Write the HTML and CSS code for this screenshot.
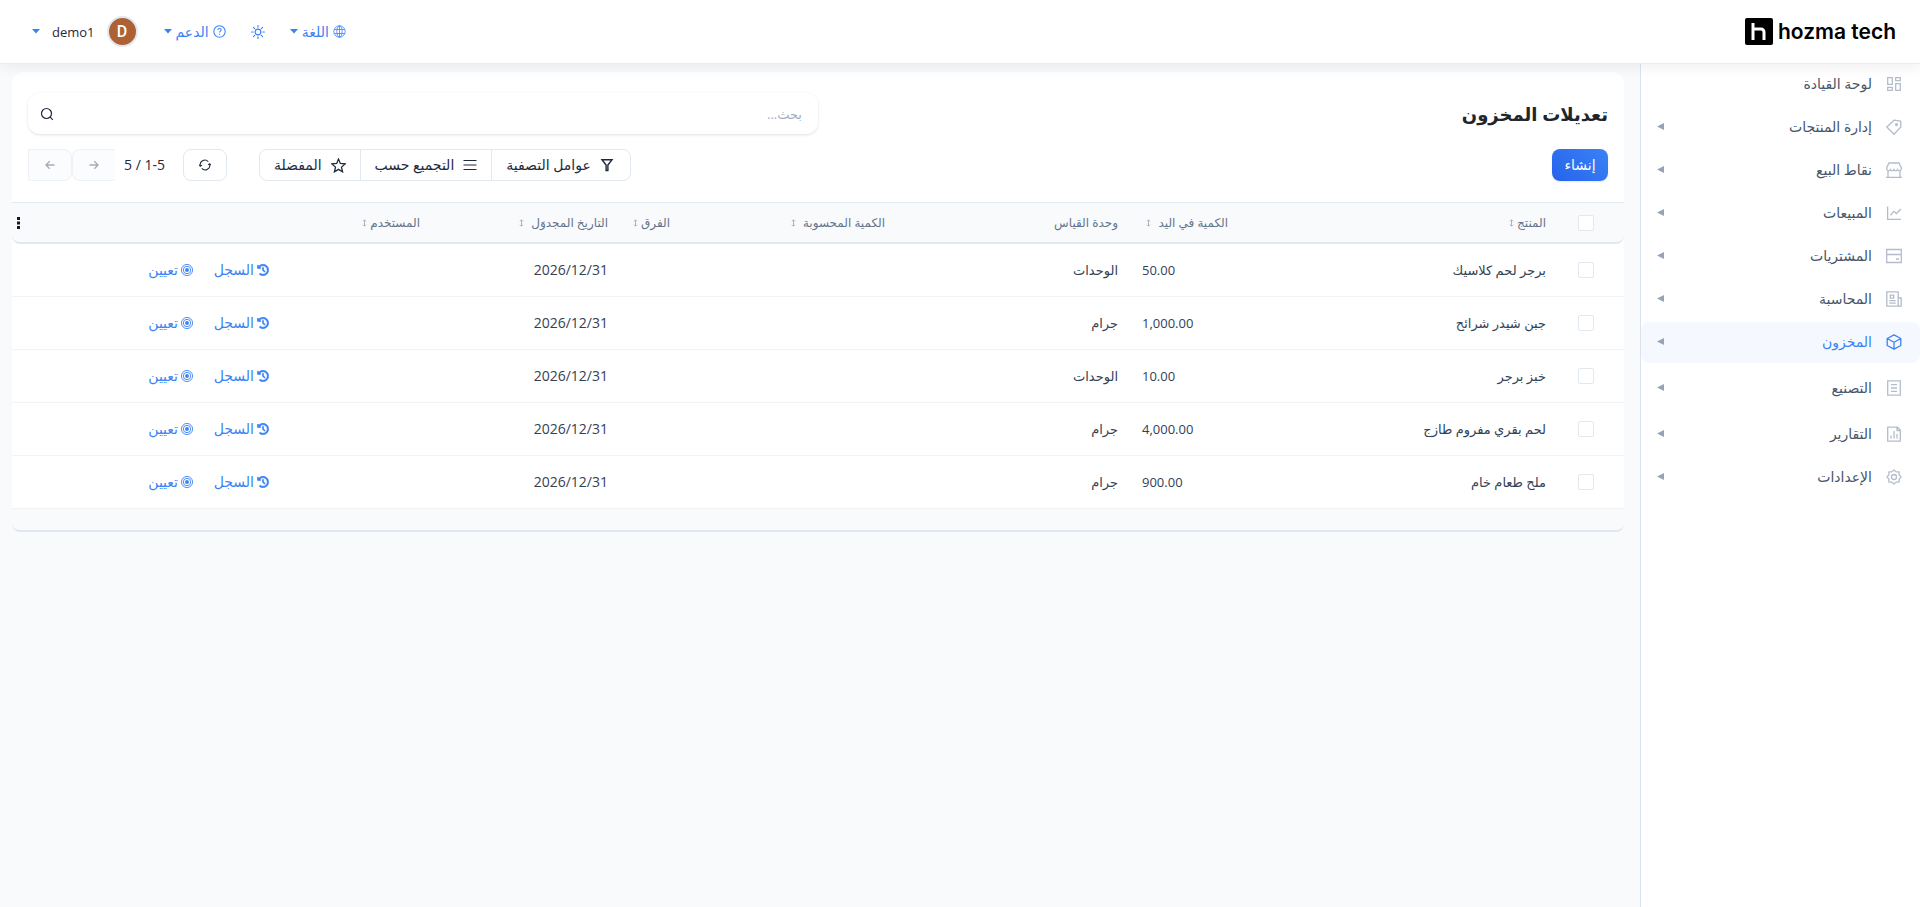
FILE: index.html
```html
<!DOCTYPE html>
<html lang="ar" dir="rtl">
<head>
    <meta charset="UTF-8">
    <meta name="viewport" content="width=device-width, initial-scale=1.0">
    <title>تعديلات المخزون</title>
    <link rel="stylesheet" href="styles.css">
</head>
<body>
    <svg class="sprite" aria-hidden="true">
        <symbol id="i-history" viewBox="-16 -16 544 544"><path fill="currentColor" stroke="currentColor" stroke-width="28" d="M75 75L41 41C26 26 0 36.500 0 57.900V168c0 13.300 10.700 24 24 24h110.100c21.400 0 32.100-25.900 17-41l-30.800-30.800C155 85.500 203 64 256 64c106 0 192 86 192 192s-86 192-192 192c-40.800 0-78.600-12.700-109.700-34.400-14.500-10.100-34.400-6.600-44.600 7.900s-6.600 34.400 7.900 44.600C151.200 495 201.700 512 256 512c141.400 0 256-114.600 256-256S397.400 0 256 0C185.300 0 121.300 28.700 75 75zm181 53c-13.300 0-24 10.700-24 24v104c0 6.400 2.500 12.500 7 17l72 72c9.400 9.400 24.600 9.400 33.900 0s9.400-24.600 0-33.900l-65-65V152c0-13.300-10.700-24-24-24z"/></symbol>
        <symbol id="i-target" viewBox="0 0 16 16"><g fill="none" stroke="currentColor"><circle cx="8" cy="8" r="7.400" stroke-width="1.200"/><circle cx="8" cy="8" r="4.900" stroke-width="1.200"/></g><circle cx="8" cy="8" r="2.600" fill="currentColor"/></symbol>
        <symbol id="i-caret" viewBox="0 0 8 5"><path fill="currentColor" d="M0 0h8L4 4.500z"/></symbol>
        <symbol id="i-side" viewBox="0 0 7 7"><path fill="currentColor" d="M7 0v7L0 3.500z"/></symbol>
        <symbol id="i-sort" viewBox="0 0 5 8"><path fill="none" stroke="currentColor" stroke-width=".8" d="M2.500 1v6M1 2.300L2.500.8 4 2.300M1 5.700l1.500 1.500L4 5.700"/></symbol>
    </svg>

    <header class="navbar">
        <a class="logo" href="#">
            <svg width="28" height="28" viewBox="0 0 28 28"><rect width="28" height="27" rx="2"/><path d="M8 5v17M8 11h8a3 3 0 0 1 3 3v8" fill="none" stroke="#fff" stroke-width="3"/></svg>
            <span>hozma tech</span>
        </a>
        <nav class="menu">
            <a class="menu-link" href="#">
                <svg width="13" height="13" viewBox="0 0 16 16" fill="none" stroke="currentColor"><circle cx="8" cy="8" r="7"/><ellipse cx="8" cy="8" rx="3.300" ry="7"/><path d="M8 1v14M1.500 5.500h13M1.500 10.500h13"/></svg>
                <span>اللغة</span>
                <svg class="caret"><use href="#i-caret"/></svg>
            </a>
            <button class="menu-link sun" type="button" aria-label="الوضع">
                <svg width="14" height="14" viewBox="0 0 16 16" fill="none" stroke="currentColor" stroke-width="1.300" stroke-linecap="round"><circle cx="8" cy="8" r="3.300"/><path d="M8 .7v1.800M8 13.500v1.800M.7 8h1.800M13.500 8h1.800M2.800 2.800l1.300 1.300M11.900 11.900l1.300 1.300M13.200 2.800l-1.300 1.300M4.100 11.900l-1.300 1.300"/></svg>
            </button>
            <a class="menu-link" href="#">
                <svg width="13" height="13" viewBox="0 0 16 16" fill="none" stroke="currentColor" stroke-width="1.300"><circle cx="8" cy="8" r="7"/><path d="M5.900 6.200c0-1.300 1-2 2.100-2s2.100.8 2.100 1.900c0 1.500-2 1.500-2 3.200"/><path d="M8.100 10.700v1.400"/></svg>
                <span>الدعم</span>
                <svg class="caret"><use href="#i-caret"/></svg>
            </a>
            <a class="menu-link user" href="#">
                <span class="avatar">D</span>
                <span class="user-name">demo1</span>
                <svg class="caret"><use href="#i-caret"/></svg>
            </a>
        </nav>
    </header>

    <div class="page">
        <nav class="sidebar">
            <a class="side-item" href="#">
                <svg class="side-icon" viewBox="0 0 16 16"><path d="M1.700 1.700h4.600v6.600H1.700zM1.700 11.300h4.600v3H1.700zM9.700 1.700h4.600v3H9.700zM9.700 7.700h4.600v6.600H9.700z"/></svg>
                <span>لوحة القيادة</span>
            </a>
            <a class="side-item" href="#">
                <svg class="side-icon" viewBox="0 0 16 16"><path d="M8 1.200l6.800 1V8L8 15.200.8 8z" stroke-linejoin="round"/><circle cx="10.500" cy="5.600" r=".9"/></svg>
                <span>إدارة المنتجات</span>
                <svg class="arrow"><use href="#i-side"/></svg>
            </a>
            <a class="side-item" href="#">
                <svg class="side-icon" viewBox="0 0 16 16"><path d="M3 1h10l2.200 4.500v2c-1 1.800-3 1.800-3.700 0-1 1.800-2.700 1.800-3.500 0-.8 1.800-2.500 1.800-3.500 0-.7 1.800-2.700 1.800-3.700 0v-2zM2 9v6M14 9v6M0 15.300h16"/></svg>
                <span>نقاط البيع</span>
                <svg class="arrow"><use href="#i-side"/></svg>
            </a>
            <a class="side-item" href="#">
                <svg class="side-icon" viewBox="0 0 16 16"><path d="M1.600 1.500v12.900H15M4.500 10.300l3.200-4 2.800 2.200L14.800 4"/></svg>
                <span>المبيعات</span>
                <svg class="arrow"><use href="#i-side"/></svg>
            </a>
            <a class="side-item" href="#">
                <svg class="side-icon" viewBox="0 0 16 16"><path d="M.7 1.500h14.600v13H.7zM.7 6.500h14.600M10 11h3"/></svg>
                <span>المشتريات</span>
                <svg class="arrow"><use href="#i-side"/></svg>
            </a>
            <a class="side-item" href="#">
                <svg class="side-icon" viewBox="0 0 16 16"><path d="M.8.800h11.400v14.400H.8zM12.200 7h3v8.200h-3M4.300 4.200h3.400v3H4.300zM3.300 9.700h6.400M3.300 12.200h6.400"/></svg>
                <span>المحاسبة</span>
                <svg class="arrow"><use href="#i-side"/></svg>
            </a>
            <a class="side-item active grouped" href="#">
                <svg class="side-icon" viewBox="0 0 16 16"><path d="M8 .900l6.800 3.600v7L8 15.100l-6.800-3.600v-7zM1.200 4.500L8 8.200l6.800-3.700M8 8.200v6.900" stroke-linejoin="round"/></svg>
                <span>المخزون</span>
                <svg class="arrow"><use href="#i-side"/></svg>
            </a>
            <a class="side-item grouped" href="#">
                <svg class="side-icon" viewBox="0 0 16 16"><path d="M1.700.800h12.600v14.400H1.700zM5 4.700h6M5 8h6M5 11.300h6"/></svg>
                <span>التصنيع</span>
                <svg class="arrow"><use href="#i-side"/></svg>
            </a>
            <a class="side-item" href="#">
                <svg class="side-icon" viewBox="0 0 16 16"><path d="M1.700 1.200h9.800l2.800 2.800v11.200H1.700zM11 1.200v3.300h3.300M5 9.500v3M8 5v7.500M11 8v4.500"/></svg>
                <span>التقارير</span>
                <svg class="arrow"><use href="#i-side"/></svg>
            </a>
            <a class="side-item" href="#">
                <svg class="side-icon" viewBox="0 0 16 16"><path d="M8 .900l2.100 2h3v3l2 2.100-2 2.100v3h-3L8 15.100l-2.100-2h-3v-3L.9 8l2-2.100v-3h3z" stroke-linejoin="round"/><circle cx="8" cy="8" r="2.500"/></svg>
                <span>الإعدادات</span>
                <svg class="arrow"><use href="#i-side"/></svg>
            </a>
        </nav>

        <main class="content">
            <div class="panel">
                <div class="panel-row">
                    <h1>تعديلات المخزون</h1>
                    <div class="search">
                        <input type="search" aria-label="بحث" placeholder="بحث...">
                        <svg width="14" height="14" viewBox="0 0 14 14" fill="none" stroke="currentColor" stroke-width="1.200"><circle cx="6.500" cy="6.500" r="5"/><path d="M10.200 10.200l2.600 2.600"/></svg>
                    </div>
                </div>
                <div class="panel-row">
                    <button class="btn-create" type="button">إنشاء</button>
                    <div class="tools">
                        <div class="filters">
                            <button type="button">
                                <svg width="14" height="14" viewBox="0 0 14 14" fill="none" stroke="currentColor" stroke-width="1.400"><path d="M2 1.800h10L7.900 7v5.500H6.100V7z"/></svg>
                                عوامل التصفية
                            </button>
                            <button type="button">
                                <svg width="14" height="14" viewBox="0 0 14 14" fill="none" stroke="currentColor" stroke-width="1.200"><path d="M.5 2.500h13M.5 7h13M.5 11.500h13"/></svg>
                                التجميع حسب
                            </button>
                            <button type="button">
                                <svg width="15" height="15" viewBox="0 0 14 14" fill="none" stroke="currentColor" stroke-width="1.200"><path d="M7 1l1.700 4.100 4.500.4-3.400 3 1 4.400L7 10.600l-3.800 2.300 1-4.400-3.400-3 4.500-.4z"/></svg>
                                المفضلة
                            </button>
                        </div>
                        <button class="btn-refresh" type="button" aria-label="تحديث">
                            <svg width="12" height="12" viewBox="0 0 14 14" fill="none" stroke="currentColor" stroke-width="1.200"><path d="M1.600 8.400A5.500 5.500 0 0 1 10.800 3M12.400 5.600A5.500 5.500 0 0 1 3.200 11"/><path d="M.3 6.600l1.200 2 1.900-1.400M13.700 7.400l-1.200-2-1.900 1.400"/></svg>
                        </button>
                        <div class="pager">
                            <span dir="ltr">5 / 1-5</span>
                            <button type="button" aria-label="السابق" disabled>
                                <svg width="10" height="10" viewBox="0 0 10 10" fill="none" stroke="currentColor" stroke-width="1.300"><path d="M.5 5h8.500M5.300 1.200L9.100 5 5.300 8.800"/></svg>
                            </button>
                            <button type="button" aria-label="التالي" disabled>
                                <svg width="10" height="10" viewBox="0 0 10 10" fill="none" stroke="currentColor" stroke-width="1.300"><path d="M9.500 5H1M4.700 1.200L.9 5l3.800 3.800"/></svg>
                            </button>
                        </div>
                    </div>
                </div>
            </div>

            <table class="list">
                <colgroup>
                    <col class="c-check"><col class="c-product"><col class="c-qty"><col class="c-uom"><col class="c-counted">
                    <col class="c-diff"><col class="c-date"><col class="c-user"><col class="c-history"><col class="c-assign"><col class="c-more">
                </colgroup>
                <thead>
                    <tr>
                        <th><input type="checkbox" aria-label="تحديد الكل"></th>
                        <th>المنتج <svg class="sort"><use href="#i-sort"/></svg></th>
                        <th>الكمية في اليد <svg class="sort wide"><use href="#i-sort"/></svg></th>
                        <th>وحدة القياس</th>
                        <th>الكمية المحسوبة <svg class="sort wide"><use href="#i-sort"/></svg></th>
                        <th>الفرق <svg class="sort"><use href="#i-sort"/></svg></th>
                        <th>التاريخ المجدوَل <svg class="sort wide"><use href="#i-sort"/></svg></th>
                        <th>المستخدم <svg class="sort"><use href="#i-sort"/></svg></th>
                        <th></th>
                        <th></th>
                        <th class="more"><button type="button" aria-label="خيارات"><svg width="3" height="12" viewBox="0 0 3 12"><path fill="currentColor" d="M0 0h3v3H0zM0 4.500h3v3H0zM0 9h3v3H0z"/></svg></button></th>
                    </tr>
                </thead>
                <tbody>
                    <tr>
                        <td><input type="checkbox" aria-label="برجر لحم كلاسيك"></td>
                        <td>برجر لحم كلاسيك</td>
                        <td class="num">50.00</td>
                        <td>الوحدات</td>
                        <td></td>
                        <td></td>
                        <td class="date">2026/12/31</td>
                        <td></td>
                        <td><button class="link" type="button"><svg><use href="#i-history"/></svg>السجل</button></td>
                        <td><button class="link" type="button"><svg><use href="#i-target"/></svg>تعيين</button></td>
                        <td></td>
                    </tr>
                    <tr>
                        <td><input type="checkbox" aria-label="جبن شيدر شرائح"></td>
                        <td>جبن شيدر شرائح</td>
                        <td class="num">1,000.00</td>
                        <td>جرام</td>
                        <td></td>
                        <td></td>
                        <td class="date">2026/12/31</td>
                        <td></td>
                        <td><button class="link" type="button"><svg><use href="#i-history"/></svg>السجل</button></td>
                        <td><button class="link" type="button"><svg><use href="#i-target"/></svg>تعيين</button></td>
                        <td></td>
                    </tr>
                    <tr>
                        <td><input type="checkbox" aria-label="خبز برجر"></td>
                        <td>خبز برجر</td>
                        <td class="num">10.00</td>
                        <td>الوحدات</td>
                        <td></td>
                        <td></td>
                        <td class="date">2026/12/31</td>
                        <td></td>
                        <td><button class="link" type="button"><svg><use href="#i-history"/></svg>السجل</button></td>
                        <td><button class="link" type="button"><svg><use href="#i-target"/></svg>تعيين</button></td>
                        <td></td>
                    </tr>
                    <tr>
                        <td><input type="checkbox" aria-label="لحم بقري مفروم طازج"></td>
                        <td>لحم بقري مفروم طازج</td>
                        <td class="num">4,000.00</td>
                        <td>جرام</td>
                        <td></td>
                        <td></td>
                        <td class="date">2026/12/31</td>
                        <td></td>
                        <td><button class="link" type="button"><svg><use href="#i-history"/></svg>السجل</button></td>
                        <td><button class="link" type="button"><svg><use href="#i-target"/></svg>تعيين</button></td>
                        <td></td>
                    </tr>
                    <tr>
                        <td><input type="checkbox" aria-label="ملح طعام خام"></td>
                        <td>ملح طعام خام</td>
                        <td class="num">900.00</td>
                        <td>جرام</td>
                        <td></td>
                        <td></td>
                        <td class="date">2026/12/31</td>
                        <td></td>
                        <td><button class="link" type="button"><svg><use href="#i-history"/></svg>السجل</button></td>
                        <td><button class="link" type="button"><svg><use href="#i-target"/></svg>تعيين</button></td>
                        <td></td>
                    </tr>
                </tbody>
            </table>
            <div class="list-end"></div>
        </main>
    </div>
</body>
</html>
```
FILE: styles.css
```css
* {
    box-sizing: border-box;
}
body {
    margin: 0;
    min-height: 100vh;
    display: flex;
    flex-direction: column;
    background-color: #f8fafc;
    color: #334155;
    font-family: "Open Sans", "DejaVu Sans", sans-serif;
    font-size: 14px;
    line-height: 20px;
}
a {
    color: inherit;
    text-decoration: none;
}
button {
    font: inherit;
    color: inherit;
    background: none;
    border: none;
    padding: 0;
    cursor: pointer;
}
svg {
    flex: none;
}
.sprite {
    position: absolute;
    width: 0;
    height: 0;
}

/* top bar */
.navbar {
    position: relative;
    z-index: 2;
    display: flex;
    justify-content: space-between;
    align-items: center;
    height: 64px;
    padding: 0 24px 0 32px;
    background-color: #fff;
    border-bottom: 1px solid #e9ecf0;
    box-shadow: 0 4px 12px rgba(0, 0, 0, 0.06);
}
.logo {
    display: flex;
    align-items: center;
    gap: 5px;
    color: #000;
    font-family: Inter, sans-serif;
    font-size: 21px;
    font-weight: 600;
    direction: ltr;
}
.menu {
    display: flex;
    align-items: center;
}
.menu-link {
    display: flex;
    align-items: center;
    gap: 4px;
    color: #3b82f6;
}
.menu-link.sun {
    margin: 0 25px;
}
.menu-link.user {
    gap: 12px;
    margin-right: 26px;
}
.caret {
    width: 8px;
    height: 5px;
}
.avatar {
    width: 31px;
    height: 31px;
    border: 2px solid #e2e8f0;
    border-radius: 50%;
    background-color: #ad6135;
    color: #fff;
    font-family: Roboto, sans-serif;
    font-size: 16px;
    font-weight: 500;
    line-height: 27px;
    text-align: center;
}
.user-name {
    color: #1e293b;
    font-size: 13px;
}

.page {
    flex: 1;
    display: flex;
}

/* side menu */
.sidebar {
    width: 280px;
    flex: none;
    background-color: #fff;
    border-left: 1px solid #dbe4ee;
}
.side-item {
    display: flex;
    align-items: center;
    height: 41px;
    margin-bottom: 2px;
    padding: 0 18px 2px 16px;
    border-radius: 8px;
    color: #475569;
}
.side-item.grouped {
    margin-bottom: 5px;
}
.side-item.active {
    background-color: #f5f9ff;
    color: #3b82f6;
}
.side-icon {
    width: 16px;
    height: 16px;
    margin-left: 14px;
    fill: none;
    stroke: #b4bccb;
    stroke-width: 1.3;
}
.active .side-icon {
    stroke: #3b82f6;
}
.arrow {
    width: 7px;
    height: 7px;
    margin-right: auto;
    color: #94a3b8;
}

/* content */
.content {
    flex: 1;
    min-width: 0;
    padding: 8px 16px 16px 12px;
}
.panel {
    display: flex;
    flex-direction: column;
    gap: 15px;
    padding: 21px 16px;
    background-color: #fff;
    border-radius: 12px 12px 0 0;
}
.panel-row {
    display: flex;
    justify-content: space-between;
    align-items: center;
}
h1 {
    margin: 0;
    color: #212529;
    font-size: 18px;
    line-height: 32px;
}
.search {
    display: flex;
    align-items: center;
    width: 50%;
    height: 41px;
    padding: 0 16px 0 12px;
    border-radius: 12px;
    box-shadow: 0 1px 3px rgba(0, 0, 0, 0.12);
    color: #1e293b;
}
.search input {
    flex: 1;
    border: none;
    outline: none;
    background: none;
    padding: 0;
    font: inherit;
    font-size: 13px;
    color: inherit;
}
.search input::placeholder {
    color: #a3afc0;
    opacity: 1;
}
.btn-create {
    width: 56px;
    height: 32px;
    border-radius: 8px;
    background: linear-gradient(45deg, #2563eb, #3b82f6);
    box-shadow: 0 1px 2px rgba(0, 0, 0, 0.1);
    color: #fff;
}
.tools {
    display: flex;
    align-items: center;
    flex: 1;
    justify-content: flex-end;
    color: #1e293b;
}
.filters {
    display: flex;
    height: 32px;
    margin-left: 32px;
    border: 1px solid #e2e8f0;
    border-radius: 8px;
}
.filters button {
    display: flex;
    align-items: center;
    gap: 9px;
    padding: 0 14px;
    border-right: 1px solid #e2e8f0;
}
.filters button:first-child {
    padding-right: 16px;
    border-right: none;
}
.btn-refresh {
    display: flex;
    align-items: center;
    justify-content: center;
    width: 44px;
    height: 32px;
    border: 1px solid #e2e8f0;
    border-radius: 8px;
}
.pager {
    display: flex;
    align-items: center;
    margin-right: 18px;
}
.pager span {
    margin-left: 9px;
}
.pager button {
    display: flex;
    align-items: center;
    justify-content: center;
    width: 43px;
    height: 32px;
    border: 1px solid #eef1f6;
    border-radius: 8px 0 0 8px;
    border-right: none;
    background-color: #fbfcfd;
    color: #a4acb9;
}
.pager button:last-child {
    width: 44px;
    border-right: 1px solid #eef1f6;
    border-radius: 0 8px 8px 0;
}

/* list */
.list {
    width: 100%;
    table-layout: fixed;
    border-collapse: separate;
    border-spacing: 0;
    background-color: #fff;
}
.c-check { width: 66px; }
.c-product { width: 318px; }
.c-qty { width: 110px; }
.c-uom { width: 233px; }
.c-counted { width: 215px; }
.c-diff { width: 62px; }
.c-date { width: 188px; }
.c-user { width: 151px; }
.c-history { width: 76px; }
.c-assign { width: 164px; }
.c-more { width: 29px; }
th,
td {
    padding: 0 12px;
    text-align: right;
    white-space: nowrap;
}
th {
    height: 42px;
    background-color: #f8fafc;
    border-top: 1px solid #e2e8f0;
    border-bottom: 2px solid #e2e8f0;
    color: #64748b;
    font-size: 12px;
    font-weight: 400;
}
th:first-child {
    border-bottom-right-radius: 8px;
}
th:last-child {
    border-bottom-left-radius: 8px;
}
td {
    height: 53px;
    padding-bottom: 1px;
    border-bottom: 1px solid #f1f3f6;
    font-size: 13px;
}
th:first-child,
td:first-child {
    padding: 0 30px 0 0;
}
.num {
    text-align: left;
}
.date {
    font-size: 14px;
}
.list input {
    appearance: none;
    display: block;
    width: 16px;
    height: 16px;
    margin: 0;
    border: 1px solid #e2e8f0;
    border-radius: 2px;
    background-color: #fff;
}
.sort {
    width: 5px;
    height: 8px;
    color: #94a3b8;
}
.sort.wide {
    margin-right: 4px;
}
th.more {
    padding: 0 0 0 5px;
    text-align: left;
}
.more button {
    display: flex;
    margin-right: auto;
    color: #0f172a;
}
.link {
    display: flex;
    align-items: center;
    gap: 3px;
    color: #3b82f6;
    font-size: 14px;
}
.link svg {
    width: 12px;
    height: 12px;
}
.list-end {
    height: 23px;
    border-bottom: 2px solid #e2e8f0;
    border-radius: 0 0 8px 8px;
}
```
